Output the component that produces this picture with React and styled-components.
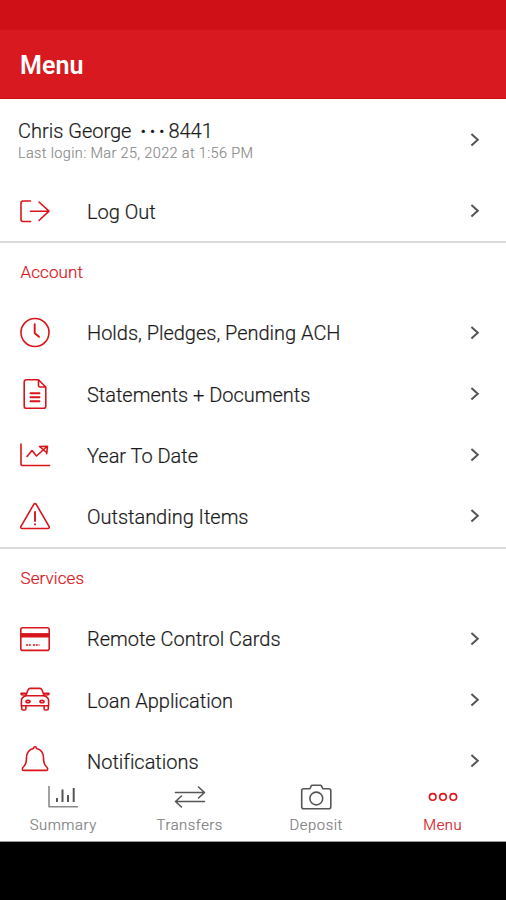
import React from 'react'
import styled, { createGlobalStyle } from 'styled-components'

const RED = '#d9141b'

const GlobalStyle = createGlobalStyle`
  body {
    background: #000;
    font-family: Roboto, "Liberation Sans", sans-serif;
    margin: 0;
  }
`

const Screen = styled.div`
  background: #000;
  box-sizing: border-box;
  display: flex;
  flex-direction: column;
  height: 900px;
  overflow: hidden;
  padding-bottom: 58px;
  width: 506px;
`

const StatusBar = styled.div`
  background: #cf1117;
  flex: none;
  height: 30px;
`

const Header = styled.header`
  align-items: center;
  background: #d8191f;
  border-bottom: 1px solid #cc1016;
  box-sizing: border-box;
  display: flex;
  flex: none;
  height: 69px;
  padding: 2px 20px 0;
`

const Title = styled.h1`
  color: #fff;
  font-size: 25px;
  font-weight: 600;
  letter-spacing: 0.1px;
  margin: 0;
`

const List = styled.main`
  background: #fff;
  flex: 1;
  min-height: 0;
  overflow: hidden;
`

const Account = styled.div`
  align-items: center;
  box-sizing: border-box;
  display: flex;
  height: 82px;
  justify-content: space-between;
  padding: 0 25px 0 18px;
`

const AccountName = styled.div`
  -webkit-text-stroke: 0.2px;
  align-items: center;
  color: #1a1a1a;
  display: flex;
  font-size: 20px;
  font-weight: 300;
  letter-spacing: 0;
  line-height: 24px;
  padding-top: 3px;
`

const Dots = styled.span`
  font-size: 17px;
  letter-spacing: 3.8px;
  margin: 0 0 0 9px;
`

const LastLogin = styled.div`
  -webkit-text-stroke: 0.15px;
  color: #8a8a8a;
  font-size: 14.5px;
  font-weight: 300;
  letter-spacing: 0.35px;
  line-height: 22px;
`

const Section = styled.section`
  & + & {
    border-top: 2px solid #dcdcdc;
  }
`

const SectionTitle = styled.h2`
  -webkit-text-stroke: 0.2px;
  color: ${RED};
  font-size: 17px;
  font-weight: 300;
  height: 59px;
  letter-spacing: 0.1px;
  line-height: 59px;
  margin: 0;
  padding-left: 20.5px;
`

const Row = styled.div`
  align-items: center;
  box-sizing: border-box;
  display: flex;
  height: ${p => p.$height || 61.25}px;
  padding: 0 25px 0 19px;
`

const Label = styled.span`
  -webkit-text-stroke: 0.2px;
  color: #1a1a1a;
  flex: 1;
  font-size: 20px;
  font-weight: 300;
  letter-spacing: -0.02px;
  line-height: 24px;
  margin-left: 36px;
  padding-top: 1.5px;
`

const Icon = styled.svg`
  display: block;
  fill: none;
  flex: none;
  stroke: ${p => p.$color || RED};
  stroke-linecap: round;
  stroke-linejoin: round;
  stroke-width: 1.6;
`

const TabBar = styled.nav`
  background: #fff;
  border-bottom: 1px solid #999;
  box-sizing: border-box;
  display: grid;
  flex: none;
  grid-template-columns: repeat(4, 1fr);
  height: 68px;
  padding-top: 7px;
`

const Tab = styled.div`
  -webkit-text-stroke: 0.2px;
  align-items: center;
  color: ${p => (p.$active ? RED : '#808080')};
  display: flex;
  flex-direction: column;
  font-size: 14.8px;
  font-weight: 300;
  gap: 2px;
  letter-spacing: 0.55px;
  line-height: 20px;
`

const Chevron = () => (
  <Icon width='12' height='16' viewBox='0 0 12 16' $color='#555'>
    <path d='M2.4 1.9 8.8 7.7 2.4 13.5' strokeWidth='2' strokeLinecap='butt' strokeLinejoin='miter' />
  </Icon>
)

const icons = {
  logout: (
    <path d='M11.5 6H4a2 2 0 0 0-2 2v16.5a2 2 0 0 0 2 2h7.5M11.5 16.2h18.5M20 7l10 9.2-10 9.3' />
  ),
  clock: (
    <>
      <circle cx='16' cy='15.5' r='14' />
      <path d='M15.7 7.3v9l4.3 3.5' strokeWidth='1.9' />
    </>
  ),
  document: (
    <>
      <path d='M19.5 1.8H7.2a2 2 0 0 0-2 2v24.4a2 2 0 0 0 2 2h17.6a2 2 0 0 0 2-2V9zM19.5 1.8v5.7a1.5 1.5 0 0 0 1.5 1.5h5.8' />
      <path d='M11.5 15.2h9M11.5 19.2h9M11.5 23.2h9' strokeWidth='1.9' />
    </>
  ),
  trend: (
    <>
      <path d='M2 5v20a1.5 1.5 0 0 0 1.5 1.5H30.5' />
      <path d='M8 17.5l5-6 4.5 5.5L28 7.5M20.5 7.5l8-.3-.8 7.5M20.5 7.5l7 6' />
    </>
  ),
  warning: (
    <>
      <path d='M14.8 4.3a1.4 1.4 0 0 1 2.4 0L30 26.3a1.4 1.4 0 0 1-1.2 2.2H3.2A1.4 1.4 0 0 1 2 26.3z' />
      <path d='M16 12v9M16 24.1v.4' strokeWidth='1.9' />
    </>
  ),
  card: (
    <>
      <rect x='1.8' y='4.8' width='28.4' height='22.6' rx='2' />
      <path d='M1.8 12.3h28.4' strokeWidth='4.4' strokeLinecap='butt' />
      <path d='M7 22h5M14 22h6.5' strokeDasharray='2 .8' strokeLinecap='butt' />
    </>
  ),
  car: (
    <>
      <path d='M6.8 11.7 9 6q.6-1.6 2.3-1.6h9.4q1.7 0 2.3 1.6l2.2 5.7' />
      <path d='M7.5 11H4.2Q2 11 2 9.3h4.7M24.5 11h3.3q2.2 0 2.2-1.7h-4.7' />
      <path d='M7 11.8h18q4.6 1.4 4.6 5v5H2.4v-5q0-3.6 4.6-5z' />
      <path d='M2.7 22v2.7q0 1.3 1.3 1.3h1.6q1.3 0 1.3-1.3V22M25.1 22v2.7q0 1.3 1.3 1.3H28q1.3 0 1.3-1.3V22' />
      <ellipse cx='9' cy='17.5' rx='2' ry='1.2' />
      <ellipse cx='23' cy='17.5' rx='2' ry='1.2' />
    </>
  ),
  bell: (
    <path d='M14.5 3.5q0-1.8 1.5-1.8t1.5 1.8q7 1.6 7 9.5 0 6 2.7 8.5 2 1.7 1.3 3.2-.3.7-1.5.7H5q-1.2 0-1.5-.7-.7-1.5 1.3-3.2Q7.5 19 7.5 13q0-7.9 7-9.5z' />
  )
}

const tabIcons = {
  summary: (
    <>
      <path d='M2 5v20.8h29' stroke='#8a8a8a' strokeLinecap='butt' />
      <path d='M10 21v-4M15.5 21V8.5M21 21v-7M26.7 21V7' strokeWidth='2' strokeLinecap='butt' />
    </>
  ),
  transfers: (
    <path d='M1.5 11.5h29M24.5 6l6 5.5-6 5.5M30.5 20.5h-29M7.5 15l-6 5.5 6 5.5' />
  ),
  deposit: (
    <>
      <path d='M3.7 7.8h6.2l1.2-2.7q.4-.9 1.4-.9h7.7q1 0 1.4.9l1.2 2.7h6q2 0 2 2v16q0 2-2 2H3.7q-2 0-2-2v-16q0-2 2-2z' />
      <circle cx='16.3' cy='17.5' r='6.4' />
    </>
  ),
  menu: (
    <>
      <circle cx='5.7' cy='15.9' r='3.3' />
      <circle cx='16' cy='15.9' r='3.3' />
      <circle cx='26.3' cy='15.9' r='3.3' />
    </>
  )
}

const sections = [
  {
    title: 'Account',
    items: [
      { icon: 'clock', label: 'Holds, Pledges, Pending ACH' },
      { icon: 'document', label: 'Statements + Documents' },
      { icon: 'trend', label: 'Year To Date' },
      { icon: 'warning', label: 'Outstanding Items' }
    ]
  },
  {
    title: 'Services',
    items: [
      { icon: 'card', label: 'Remote Control Cards' },
      { icon: 'car', label: 'Loan Application' },
      { icon: 'bell', label: 'Notifications' }
    ]
  }
]

const tabs = [
  { icon: 'summary', label: 'Summary' },
  { icon: 'transfers', label: 'Transfers' },
  { icon: 'deposit', label: 'Deposit' },
  { icon: 'menu', label: 'Menu', active: true }
]

const MenuRow = ({ icon, label, height }) => (
  <Row $height={height}>
    <Icon width='32' height='32' viewBox='0 0 32 32'>{icons[icon]}</Icon>
    <Label>{label}</Label>
    <Chevron />
  </Row>
)

export default function App () {
  return (
    <Screen>
      <GlobalStyle />
      <StatusBar />
      <Header>
        <Title>Menu</Title>
      </Header>
      <List>
        <Section>
          <Account>
            <div>
              <AccountName>Chris George<Dots>•••</Dots>8441</AccountName>
              <LastLogin>Last login: Mar 25, 2022 at 1:56 PM</LastLogin>
            </div>
            <Chevron />
          </Account>
          <MenuRow icon='logout' label='Log Out' height={60} />
        </Section>
        {sections.map(({ title, items }) => (
          <Section key={title}>
            <SectionTitle>{title}</SectionTitle>
            {items.map(item => <MenuRow key={item.label} {...item} />)}
          </Section>
        ))}
      </List>
      <TabBar>
        {tabs.map(({ icon, label, active }) => (
          <Tab key={label} $active={active}>
            <Icon width='32' height='32' viewBox='0 0 32 32' $color={active ? RED : '#555'}>
              {tabIcons[icon]}
            </Icon>
            {label}
          </Tab>
        ))}
      </TabBar>
    </Screen>
  )
}
